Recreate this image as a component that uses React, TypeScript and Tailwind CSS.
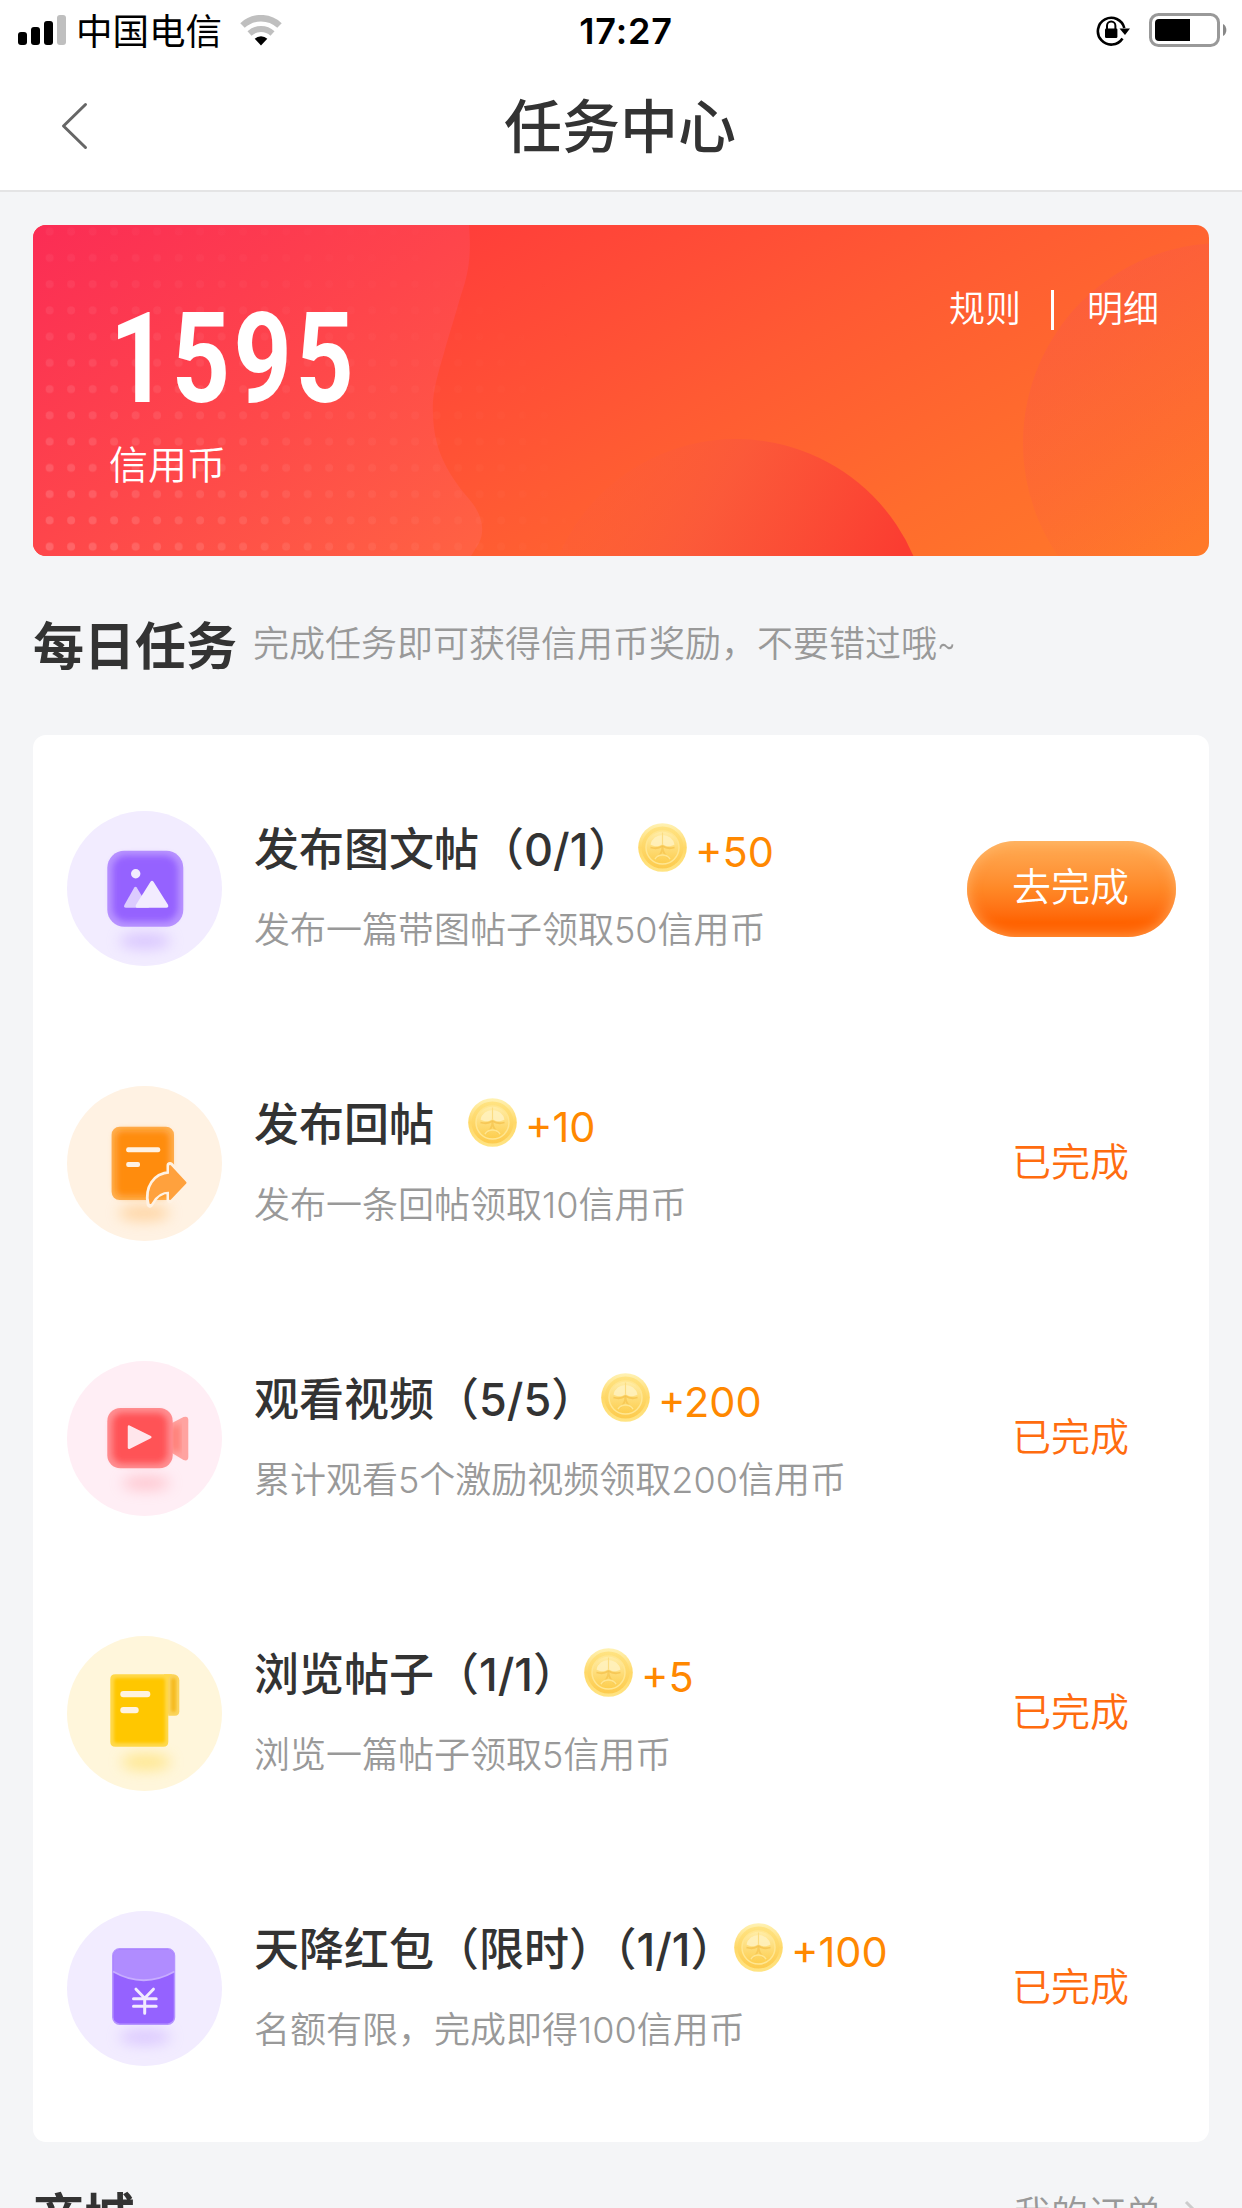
import React from 'react';

type TaskIconName = 'image' | 'reply' | 'video' | 'browse' | 'packet';

interface Task {
  icon: TaskIconName;
  title: string;
  titleWidth: string;
  reward: number;
  desc: string;
  done: boolean;
}

const tasks: Task[] = [
  { icon: 'image', title: '发布图文帖（0/1）', titleWidth: 'w-[384px]', reward: 50, desc: '发布一篇带图帖子领取50信用币', done: false },
  { icon: 'reply', title: '发布回帖', titleWidth: 'w-[214px]', reward: 10, desc: '发布一条回帖领取10信用币', done: true },
  { icon: 'video', title: '观看视频（5/5）', titleWidth: 'w-[347px]', reward: 200, desc: '累计观看5个激励视频领取200信用币', done: true },
  { icon: 'browse', title: '浏览帖子（1/1）', titleWidth: 'w-[330px]', reward: 5, desc: '浏览一篇帖子领取5信用币', done: true },
  { icon: 'packet', title: '天降红包（限时）（1/1）', titleWidth: 'w-[480px]', reward: 100, desc: '名额有限，完成即得100信用币', done: true },
];

const StatusBar: React.FC = () => (
  <div className="h-[60px] px-[18px] grid grid-cols-3 items-center text-black">
    <div className="flex items-center">
      <svg className="w-[48px] h-[30px]" viewBox="0 0 48 30">
        <rect x="0" y="17" width="9" height="13" rx="3" />
        <rect x="13" y="12" width="9" height="18" rx="3" />
        <rect x="26" y="6" width="9" height="24" rx="3" />
        <rect x="39" y="0" width="9" height="30" rx="3" fill="#bfbfbf" />
      </svg>
      <span className="ml-[10px] mt-[3px] text-[36.5px] leading-[40px]">中国电信</span>
      <svg className="ml-[18px] w-[42px] h-[31px]" viewBox="0 0 42 31" fill="none">
        <path d="M2.5 10.5a27 27 0 0 1 37 0" stroke="#bfbfbf" strokeWidth="6.5" />
        <path d="M9.5 18.5a17 17 0 0 1 23 0" stroke="#bfbfbf" strokeWidth="6" />
        <path d="M21 30.5l-6.3-6.8a9 9 0 0 1 12.6 0z" fill="#000" />
      </svg>
    </div>
    <div className="text-center font-semibold text-[36px] leading-[40px] tracking-[0.8px] pl-[10px] pt-[2px]">17:27</div>
    <div className="flex items-center justify-end -mr-[3px]">
      <svg className="w-[35px] h-[32px]" viewBox="0 0 35 32" fill="none">
        <path d="M26.5 24.5A13.4 13.4 0 1 1 28.3 14" stroke="#000" strokeWidth="2.6" />
        <path d="M23.5 14.5h10.5l-5 6.5z" fill="#000" />
        <rect x="9" y="14.5" width="12.4" height="9.5" rx="1.2" fill="#000" />
        <path d="M11 15v-3.3a4.2 4.2 0 0 1 8.4 0V15" stroke="#000" strokeWidth="2" />
      </svg>
      <svg className="ml-[18px] w-[78px] h-[34px]" viewBox="0 0 78 34" fill="none">
        <rect x="1.5" y="1.5" width="68" height="31" rx="8" stroke="#999" strokeWidth="3" />
        <path d="M10 6h31v22H10a4 4 0 0 1-4-4V10a4 4 0 0 1 4-4z" fill="#000" />
        <path d="M74 11c4.5 2 4.5 10 0 12z" fill="#888" />
      </svg>
    </div>
  </div>
);

const NavBar: React.FC = () => (
  <div className="relative h-[132px] border-b-2 border-[#e4e4e5] flex justify-center pr-[2px]">
    <button className="absolute left-[59px] top-[42px]">
      <svg className="w-[30px] h-[48px]" viewBox="0 0 30 48" fill="none">
        <path d="M26.5 2.5L4.5 24l22 21.5" stroke="#666" strokeWidth="3" strokeLinecap="round" strokeLinejoin="round" />
      </svg>
    </button>
    <h1 className="text-[58px] leading-[134px] font-medium text-[#333]">任务中心</h1>
  </div>
);

const BannerArt: React.FC = () => (
  <svg className="absolute inset-0 w-full h-full" viewBox="0 0 1176 331" fill="none">
    <defs>
      <linearGradient id="base" gradientUnits="userSpaceOnUse" x1="436" y1="0" x2="765" y2="572">
        <stop offset="0" stopColor="#ff3e3a" />
        <stop offset="0.4" stopColor="#ff5a33" />
        <stop offset="0.7" stopColor="#ff6c2d" />
        <stop offset="1" stopColor="#ff7a29" />
      </linearGradient>
      <linearGradient id="wave" gradientUnits="userSpaceOnUse" x1="0" y1="0" x2="300" y2="420">
        <stop offset="0" stopColor="#fb2c55" />
        <stop offset="0.5" stopColor="#fe454b" />
        <stop offset="1" stopColor="#ff6143" />
      </linearGradient>
      <linearGradient id="hill" gradientUnits="userSpaceOnUse" x1="590" y1="240" x2="840" y2="380">
        <stop offset="0" stopColor="#fb5c3b" stopOpacity="0.3" />
        <stop offset="0.35" stopColor="#fb583a" stopOpacity="0.9" />
        <stop offset="1" stopColor="#fb3c31" />
      </linearGradient>
      <linearGradient id="moon" gradientUnits="userSpaceOnUse" x1="1010" y1="90" x2="1170" y2="310">
        <stop offset="0" stopColor="#f95848" stopOpacity="0.42" />
        <stop offset="1" stopColor="#f95848" stopOpacity="0" />
      </linearGradient>
      <linearGradient id="fade" gradientUnits="userSpaceOnUse" x1="0" y1="331" x2="70" y2="-30">
        <stop offset="0" stopColor="#fff" stopOpacity="0.18" />
        <stop offset="1" stopColor="#fff" stopOpacity="0.02" />
      </linearGradient>
      <linearGradient id="fadeX" x1="0" y1="0" x2="1" y2="0">
        <stop offset="0" stopColor="#fff" />
        <stop offset="1" stopColor="#fff" stopOpacity="0" />
      </linearGradient>
      <pattern id="dots" width="21.5" height="26.25" patternUnits="userSpaceOnUse" x="5.9" y="-6.4">
        <circle cx="10.75" cy="13.1" r="4" fill="#fff" />
      </pattern>
      <mask id="dotMask">
        <rect width="560" height="331" fill="url(#dots)" />
      </mask>
      <mask id="xMask" maskUnits="userSpaceOnUse" x="0" y="0" width="600" height="331">
        <rect width="560" height="331" fill="url(#fadeX)" />
      </mask>
    </defs>
    <rect width="1176" height="331" fill="url(#base)" />
    <circle cx="1190" cy="218" r="200" fill="url(#moon)" />
    <circle cx="703" cy="407" r="193" fill="url(#hill)" />
    <path
      d="M0 0H436C438 25 437 45 428 70C420 98 416 110 411 128C402 158 399 172 400 190C401 222 412 246 436 274C450 290 452 306 446 318L438 331H0Z"
      fill="url(#wave)"
    />
    <g mask="url(#xMask)">
      <rect width="560" height="331" fill="url(#fade)" mask="url(#dotMask)" />
    </g>
  </svg>
);

const CreditBanner: React.FC = () => (
  <section className="relative h-[331px] rounded-[13px] overflow-hidden text-white flex justify-between">
    <BannerArt />
    <div className="relative pl-[76px] pt-[89px]">
      <div className="w-fit pl-[1px] origin-left scale-x-[0.8] font-['Roboto'] font-bold text-[127px] leading-[90px] tracking-[4.5px]">1595</div>
      <div className="mt-[38px] text-[39px] leading-[46px] font-[350]">信用币</div>
    </div>
    <div className="relative flex items-center h-[40px] mt-[65px] mr-[50px] text-[36px] leading-[40px] font-[350]">
      <span className="-mt-[3px]">规则</span>
      <span className="w-[3px] h-[40px] bg-white ml-[30px] mr-[33px]" />
      <span className="-mt-[3px]">明细</span>
    </div>
  </section>
);

const Coin: React.FC = () => (
  <svg className="w-[49px] h-[49px] shrink-0 -mt-[5px]" viewBox="0 0 49 49" fill="none">
    <defs>
      <linearGradient id="coinRim" x1="0.5" y1="0" x2="0.5" y2="1">
        <stop offset="0" stopColor="#fff2b4" />
        <stop offset="0.5" stopColor="#ffd868" />
        <stop offset="1" stopColor="#ffe484" />
      </linearGradient>
      <linearGradient id="coinBand" x1="0.5" y1="0" x2="0.5" y2="1">
        <stop offset="0" stopColor="#ffe382" />
        <stop offset="1" stopColor="#fdcb4e" />
      </linearGradient>
      <linearGradient id="coinFace" x1="0.5" y1="0" x2="0.5" y2="1">
        <stop offset="0" stopColor="#ffeda8" />
        <stop offset="1" stopColor="#fdcd4c" />
      </linearGradient>
    </defs>
    <circle cx="24.5" cy="24.5" r="24.3" fill="url(#coinRim)" />
    <circle cx="24.5" cy="24.5" r="21" fill="url(#coinBand)" />
    <circle cx="24.5" cy="24.5" r="16.5" fill="url(#coinFace)" stroke="#ffe691" strokeWidth="1.5" />
    <path d="M12.5 21.5a12.3 12.3 0 0 1 24 0c-4 2.5-8.500 2.500-12-.5-3.500 3-8 3-12 .5z" fill="#fff1bd" opacity="0.9" />
    <path d="M24.5 9.5v12" stroke="#fbdc82" strokeWidth="1.2" />
    <path d="M12.500 24.500q7 2 12-1.500q5 3.500 12 1.500" stroke="#f3bf48" strokeWidth="1.8" opacity="0.7" />
    <path d="M24.500 23.500c0 6-2.500 9-6.500 12M24.500 23.500c0 6 2.500 9 6.500 12" stroke="#f3bf48" strokeWidth="1.8" opacity="0.6" />
    <path d="M17 36a9 9 0 0 1 15 0" stroke="#ffe691" strokeWidth="1.5" />
  </svg>
);

const ImageIcon: React.FC = () => (
  <>
    <circle cx="77.5" cy="77.5" r="77.5" fill="#f2ecff" />
    <ellipse cx="78" cy="130" rx="26" ry="8" fill="#c9adff" opacity="0.6" filter="url(#blurLg)" />
    <rect x="40.3" y="39.7" width="76" height="76" rx="17" fill="#b893ff" />
    <rect x="45.5" y="44.5" width="65.5" height="66" rx="14" fill="#9562ff" filter="url(#blurSm)" />
    <circle cx="68.7" cy="62.7" r="4.7" fill="#f2ecff" />
    <path d="M67.3 76.5q1.2-1.500 2.400 0L82 96.700H59q-3 0-1.500-3z" fill="#dccbff" />
    <path d="M83.5 70.8q1.500-2 3 0l14.300 22.700q1.500 3-1.500 3.200H70q-2-.5-1-3z" fill="#f2ecff" />
  </>
);

const ReplyIcon: React.FC = () => (
  <>
    <circle cx="77.5" cy="77.5" r="77.5" fill="#fff2e3" />
    <ellipse cx="77" cy="127" rx="26" ry="8" fill="#ffc27a" opacity="0.6" filter="url(#blurLg)" />
    <rect x="44.6" y="40.7" width="62.4" height="73.3" rx="8" fill="#ffb055" />
    <rect x="48.5" y="44.5" width="54.5" height="66" rx="7" fill="#ff8c0a" filter="url(#blurSm)" />
    <rect x="59.2" y="61.3" width="34" height="5" rx="2" fill="#fff2e3" />
    <rect x="59.2" y="76" width="13.8" height="5" rx="2" fill="#fff2e3" />
    <path
      d="M103 79.5L119 96.7L103 113.5V104C96 104 88 108 83 118C80 102 88 89 103 88.5Z"
      fill="#fff2e3"
      stroke="#fff2e3"
      strokeWidth="7"
      strokeLinejoin="round"
    />
    <path
      d="M103 80L118.5 96.7L103 113V104.5C95 104.5 88 108 83.5 117C80 102 88 89.500 103 88.5Z"
      fill="#ffa13d"
      stroke="#ffa13d"
      strokeWidth="2"
      strokeLinejoin="round"
    />
  </>
);

const VideoIcon: React.FC = () => (
  <>
    <circle cx="77.5" cy="77.5" r="77.5" fill="#ffeef5" />
    <ellipse cx="79" cy="122" rx="24" ry="7" fill="#ffaab5" opacity="0.6" filter="url(#blurLg)" />
    <path d="M105 62l11.5-6q4.800-1.500 4.800 3v37q0 4.500-4.800 3L105 92z" fill="#ffa3a0" />
    <path d="M105 66l8-3v29l-8-3z" fill="#ff7d75" filter="url(#blurSm)" />
    <rect x="40.3" y="47" width="65.4" height="60.3" rx="13" fill="#ff8f92" />
    <rect x="45.5" y="52" width="55" height="50.5" rx="10" fill="#ff5257" filter="url(#blurSm)" />
    <path d="M62 65.5l21.3 10.7L62 86.800z" fill="#ffe6ec" stroke="#ffe6ec" strokeWidth="2.5" strokeLinejoin="round" />
  </>
);

const BrowseIcon: React.FC = () => (
  <>
    <circle cx="77.5" cy="77.5" r="77.5" fill="#fff6db" />
    <ellipse cx="79" cy="126" rx="25" ry="8" fill="#ffdf66" opacity="0.65" filter="url(#blurLg)" />
    <path d="M97 38.3h9.3a6 6 0 0 1 6 6v31q0 4.400-4.400 4.400h-6.600z" fill="#fbd35a" />
    <rect x="104" y="42" width="5" height="34" rx="2.5" fill="#f5ba1c" filter="url(#blurXs)" />
    <path d="M48.3 38.3h57q-4 2-4 7v60.400q0 5-5 5h-48q-5 0-5-5v-62.400q0-5 5-5z" fill="#ffd84a" />
    <rect x="47" y="42" width="51" height="65" rx="3" fill="#ffc700" filter="url(#blurXs)" />
    <rect x="53.3" y="55" width="30" height="6.3" rx="3" fill="#fff3e0" />
    <rect x="53.3" y="71" width="18.4" height="6.3" rx="3" fill="#fff3e0" />
  </>
);

const PacketIcon: React.FC = () => (
  <>
    <circle cx="77.5" cy="77.5" r="77.5" fill="#f2ecff" />
    <ellipse cx="78" cy="126" rx="26" ry="8" fill="#cdb3ff" opacity="0.6" filter="url(#blurLg)" />
    <rect x="45.8" y="37.8" width="61.7" height="75.4" rx="7" fill="#9562ff" stroke="#b594ff" strokeWidth="1.5" />
    <path d="M46.3 60.5V45a6.5 6.5 0 0 1 6.5-6.5h47.7a6.5 6.5 0 0 1 6.5 6.5v15.500q-30.300 17.500-60.700 0z" fill="#b08cff" />
    <path d="M46 60.5q30.700 17.500 61.500 0" stroke="#c7adff" strokeWidth="1.8" />
    <path d="M69 78.2l8.7 9 8.7-9M77.7 87v15.300M66.500 87.700h22.700M66.500 95.300h22.700" stroke="#f2ecff" strokeWidth="3" strokeLinecap="round" />
  </>
);

const icons: Record<TaskIconName, React.FC> = {
  image: ImageIcon,
  reply: ReplyIcon,
  video: VideoIcon,
  browse: BrowseIcon,
  packet: PacketIcon,
};

const TaskRow: React.FC<{ task: Task }> = ({ task }) => {
  const Icon = icons[task.icon];

  return (
    <li className="h-[275px] flex items-center">
      <svg className="w-[155px] h-[155px] shrink-0" viewBox="0 0 155 155" fill="none">
        <Icon />
      </svg>
      <div className="ml-[32px] flex-1 -mt-[2px]">
        <div className="flex items-center h-[60px] whitespace-nowrap">
          <h3 className={`${task.titleWidth} shrink-0 text-[45px] leading-[60px] font-medium text-[#333]`}>{task.title}</h3>
          <Coin />
          <span className="ml-[8px] mt-[3px] text-[41.5px] leading-[60px] font-[370] text-[#ff8800]">+{task.reward}</span>
        </div>
        <p className="mt-[25px] text-[36px] leading-[50px] font-[350] text-[#999] whitespace-nowrap">{task.desc}</p>
      </div>
      {task.done ? (
        <span className="w-[209px] pr-[2px] pb-[3px] text-center text-[39px] font-[350] text-[#ff6c0f]">已完成</span>
      ) : (
        <button className="w-[209px] h-[96px] pr-[2px] pb-[2px] rounded-full text-[39px] font-[350] text-white bg-linear-to-b from-[#ffad55] via-[#ff8826] via-50% to-[#ff6200] to-85% shadow-[inset_0_0_14px_rgba(255,190,120,0.75)]">
          去完成
        </button>
      )}
    </li>
  );
};

export default function App() {
  return (
    <div className="w-[1242px] h-[2208px] overflow-hidden bg-[#f4f5f7] font-['Inter','Noto_Sans_CJK_SC',sans-serif]">
      {/* soft edges shared by the task icons */}
      <svg className="absolute w-0 h-0">
        <defs>
          <filter id="blurXs" x="-20%" y="-20%" width="140%" height="140%"><feGaussianBlur stdDeviation="1.5" /></filter>
          <filter id="blurSm" x="-20%" y="-20%" width="140%" height="140%"><feGaussianBlur stdDeviation="3" /></filter>
          <filter id="blurLg" x="-50%" y="-200%" width="200%" height="500%"><feGaussianBlur stdDeviation="7" /></filter>
        </defs>
      </svg>

      <header className="bg-white">
        <StatusBar />
        <NavBar />
      </header>

      <main className="px-[33px] pt-[33px]">
        <CreditBanner />

        <div className="h-[179px] flex items-center">
          <h2 className="pt-[3px] text-[51px] font-bold text-[#333]">每日任务</h2>
          <p className="ml-[16px] pb-[4px] text-[36px] font-[350] text-[#999] whitespace-nowrap">
            完成任务即可获得信用币奖励，不要错过哦<span className="inline-block origin-left scale-x-[0.8]">~</span>
          </p>
        </div>

        <ul className="bg-white rounded-[13px] pl-[34px] pr-[33px] py-[16px]">
          {tasks.map((task) => (
            <TaskRow key={task.title} task={task} />
          ))}
        </ul>

        <div className="pt-[38px] flex items-center justify-between whitespace-nowrap">
          <h2 className="text-[51px] font-bold text-[#333]">商城</h2>
          <div className="flex items-center pr-[9px] pb-[8px] text-[37px] font-[350] text-[#999]">
            我的订单
            <svg className="ml-[22px] w-[16px] h-[28px]" viewBox="0 0 16 28" fill="none">
              <path d="M2 2l12 12L2 26" stroke="#ccc" strokeWidth="3" />
            </svg>
          </div>
        </div>
      </main>
    </div>
  );
}
